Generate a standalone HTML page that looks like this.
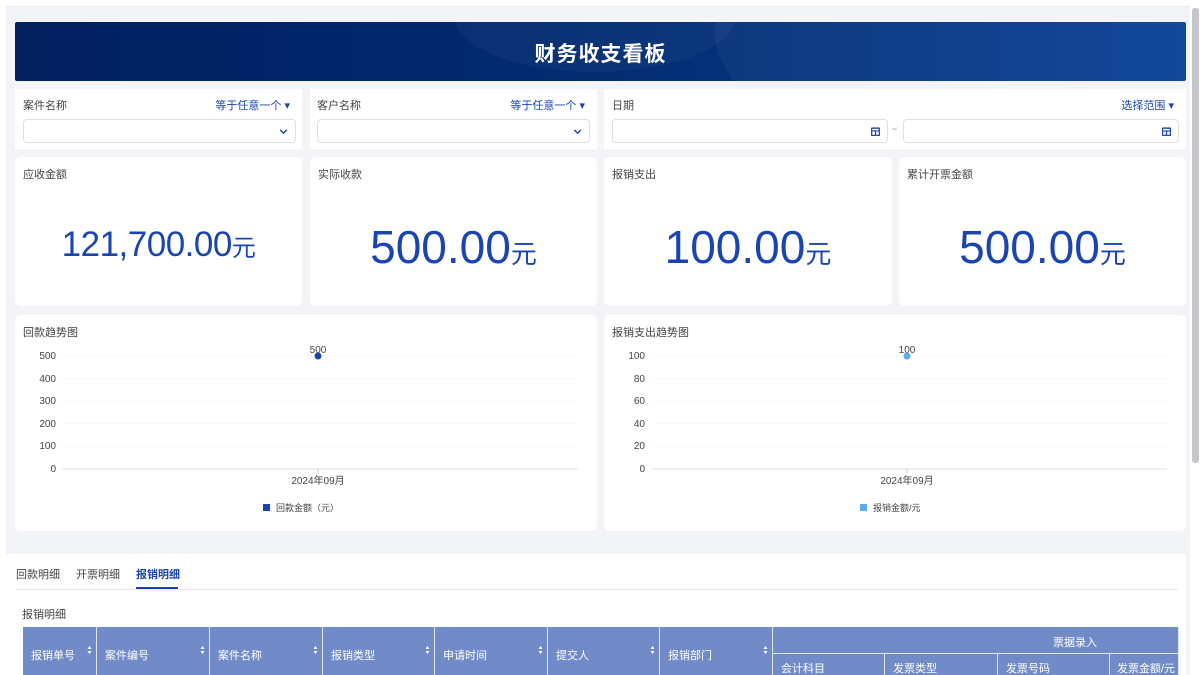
<!DOCTYPE html>
<html><head><meta charset="utf-8"><style>
*{box-sizing:border-box;margin:0;padding:0}
html,body{width:1200px;height:675px;overflow:hidden}
body{background:#fff;font-family:"Liberation Sans","Noto Sans CJK SC",sans-serif;color:#333;position:relative}
.bg{position:absolute;left:6px;top:6px;width:1184px;height:669px;background:#f3f4f8;border-top:1px solid #e8e9ee}
.abs{position:absolute}
.card{position:absolute;background:#fff;border-radius:6px}
.banner{left:15px;top:22px;width:1171px;height:59px;border-radius:2px;background:linear-gradient(90deg,#021f5e 0%,#032c72 50%,#0a4196 100%);overflow:hidden}
.banner h1{position:absolute;width:100%;top:16px;text-align:center;color:#fff;font-size:21px;font-weight:bold;letter-spacing:1px}
.lbl{font-size:11px;color:#444}
.blue{color:#1a45b0}
.inp{position:absolute;height:24px;border:1px solid #dcdfe6;border-radius:4px;background:#fff}
.kt{position:absolute;left:8px;top:9px;font-size:11px;color:#444}
.kv{position:absolute;left:0;right:0;text-align:center;color:#1a45b0}
.ax{font-size:10px;fill:#444}
.th{position:absolute;top:627px;height:48px;background:#718bc8;color:#fff;font-size:11px;border-right:1px solid #dfe5f3}
.srt{position:absolute;right:4px;top:17px;width:5px;height:12px}
</style></head><body>
<div class="bg"></div>
<div class="abs" style="left:1192px;top:8px;width:7px;height:455px;background:#c4c6cb;border-radius:3px"></div>
<div class="card banner">
<div class="abs" style="left:440px;top:-60px;width:280px;height:110px;border-radius:50%;background:rgba(255,255,255,0.035)"></div>
<div class="abs" style="left:700px;top:-140px;width:700px;height:300px;border-radius:50%;background:rgba(255,255,255,0.04)"></div>
<h1>财务收支看板</h1></div>

<svg width="0" height="0" style="position:absolute"><defs>
<symbol id="chev" viewBox="0 0 10 10"><path d="M2 3.5 L5 6.5 L8 3.5" fill="none" stroke="#1a45b0" stroke-width="1.3"/></symbol>
<symbol id="cal" viewBox="0 0 10 10"><rect x="1.5" y="2" width="7" height="6.5" fill="none" stroke="#1a45b0" stroke-width="1.1"/><path d="M1.5 4.5H8.5M5 4.5V8.5M3.5 1V2.5M6.5 1V2.5" stroke="#1a45b0" stroke-width="1.1"/></symbol>
<symbol id="srt" viewBox="0 0 5 12"><path d="M0.5 5 L2.5 2 L4.5 5Z M0.5 7 L2.5 10 L4.5 7Z" fill="#fff"/></symbol>
</defs></svg>

<div class="card" style="left:15px;top:89px;width:287px;height:60px;border-radius:0">
<div class="abs lbl" style="left:8px;top:8px">案件名称</div>
<div class="abs blue" style="right:12px;top:8px;font-size:11px">等于任意一个 ▾</div>
<div class="inp" style="left:8px;top:30px;width:273px"><svg class="abs" style="right:6px;top:6px" width="11" height="11"><use href="#chev"/></svg></div></div>
<div class="card" style="left:310px;top:89px;width:287px;height:60px;border-radius:0">
<div class="abs lbl" style="left:7px;top:8px">客户名称</div>
<div class="abs blue" style="right:12px;top:8px;font-size:11px">等于任意一个 ▾</div>
<div class="inp" style="left:7px;top:30px;width:273px"><svg class="abs" style="right:6px;top:6px" width="11" height="11"><use href="#chev"/></svg></div></div>
<div class="card" style="left:604px;top:89px;width:582px;height:60px;border-radius:0">
<div class="abs lbl" style="left:8px;top:8px">日期</div>
<div class="abs blue" style="right:12px;top:8px;font-size:11px">选择范围 ▾</div>
<div class="inp" style="left:8px;top:30px;width:276px"><svg class="abs" style="right:6px;top:6px" width="11" height="11"><use href="#cal"/></svg></div>
<div class="abs" style="left:288px;top:35px;font-size:9px;color:#888">~</div>
<div class="inp" style="left:299px;top:30px;width:276px"><svg class="abs" style="right:6px;top:6px" width="11" height="11"><use href="#cal"/></svg></div></div>

<div class="card" style="left:15px;top:157px;width:287px;height:149px"><div class="kt">应收金额</div><div class="kv" style="top:68px;font-size:35px;letter-spacing:-0.5px">121,700.00<span style="font-size:24px">元</span></div></div>
<div class="card" style="left:310px;top:157px;width:287px;height:149px"><div class="kt">实际收款</div><div class="kv" style="top:63px;font-size:46px">500.00<span style="font-size:26px">元</span></div></div>
<div class="card" style="left:604px;top:157px;width:288px;height:149px"><div class="kt">报销支出</div><div class="kv" style="top:63px;font-size:46px">100.00<span style="font-size:26px">元</span></div></div>
<div class="card" style="left:899px;top:157px;width:287px;height:149px"><div class="kt">累计开票金额</div><div class="kv" style="top:63px;font-size:46px">500.00<span style="font-size:26px">元</span></div></div>

<div class="card" style="left:15px;top:315px;width:582px;height:216px"><div class="kt" style="top:9px">回款趋势图</div></div>
<div class="card" style="left:604px;top:315px;width:582px;height:216px"><div class="kt" style="top:9px">报销支出趋势图</div></div>
<svg class="abs" style="left:0;top:0" width="1200" height="540" font-family="Liberation Sans,Noto Sans CJK SC,sans-serif">
<g stroke="#f0f0f0" stroke-dasharray="2,2"><line x1="62" x2="578" y1="356" y2="356"/><line x1="62" x2="578" y1="378.6" y2="378.6"/><line x1="62" x2="578" y1="401.2" y2="401.2"/><line x1="62" x2="578" y1="423.8" y2="423.8"/><line x1="62" x2="578" y1="446.4" y2="446.4"/>
<line x1="652" x2="1167" y1="356" y2="356"/><line x1="652" x2="1167" y1="378.6" y2="378.6"/><line x1="652" x2="1167" y1="401.2" y2="401.2"/><line x1="652" x2="1167" y1="423.8" y2="423.8"/><line x1="652" x2="1167" y1="446.4" y2="446.4"/></g>
<line x1="62" x2="578" y1="469" y2="469" stroke="#ddd"/><line x1="652" x2="1167" y1="469" y2="469" stroke="#ddd"/>
<line x1="318" x2="318" y1="469" y2="473" stroke="#ccc"/><line x1="907" x2="907" y1="469" y2="473" stroke="#ccc"/>
<g class="ax" text-anchor="end"><text x="56" y="359">500</text><text x="56" y="382">400</text><text x="56" y="404">300</text><text x="56" y="427">200</text><text x="56" y="449">100</text><text x="56" y="472">0</text>
<text x="645" y="359">100</text><text x="645" y="382">80</text><text x="645" y="404">60</text><text x="645" y="427">40</text><text x="645" y="449">20</text><text x="645" y="472">0</text></g>
<g class="ax" text-anchor="middle"><text x="318" y="353">500</text><text x="318" y="484">2024年09月</text><text x="907" y="353">100</text><text x="907" y="484">2024年09月</text></g>
<circle cx="318" cy="356" r="3.5" fill="#1a45b0"/><circle cx="907" cy="356" r="3.5" fill="#5aaee8"/>
<rect x="263" y="504" width="7" height="7" fill="#1a45b0"/><text x="276" y="511" font-size="9" fill="#444">回款金额（元）</text>
<rect x="860" y="504" width="7" height="7" fill="#5aaee8"/><text x="873" y="511" font-size="9" fill="#444">报销金额/元</text>
</svg>

<div class="abs" style="left:6px;top:554px;width:1180px;height:121px;background:#fff"></div>
<div class="abs" style="left:16px;top:566px;font-size:11px;color:#444">回款明细</div>
<div class="abs" style="left:76px;top:566px;font-size:11px;color:#444">开票明细</div>
<div class="abs" style="left:136px;top:566px;font-size:11px;color:#1a45b0;font-weight:bold">报销明细</div>
<div class="abs" style="left:16px;top:589px;width:1162px;height:1px;background:#e6e6e6"></div>
<div class="abs" style="left:136px;top:587px;width:42px;height:2px;background:#1a45b0"></div>
<div class="abs" style="left:22px;top:606px;font-size:11px;color:#444">报销明细</div>

<div class="th" style="left:23px;width:74px"><span class="abs" style="left:8px;top:20px">报销单号</span><svg class="srt"><use href="#srt"/></svg></div>
<div class="th" style="left:97px;width:113px"><span class="abs" style="left:8px;top:20px">案件编号</span><svg class="srt"><use href="#srt"/></svg></div>
<div class="th" style="left:210px;width:113px"><span class="abs" style="left:8px;top:20px">案件名称</span><svg class="srt"><use href="#srt"/></svg></div>
<div class="th" style="left:323px;width:112px"><span class="abs" style="left:8px;top:20px">报销类型</span><svg class="srt"><use href="#srt"/></svg></div>
<div class="th" style="left:435px;width:113px"><span class="abs" style="left:8px;top:20px">申请时间</span><svg class="srt"><use href="#srt"/></svg></div>
<div class="th" style="left:548px;width:112px"><span class="abs" style="left:8px;top:20px">提交人</span><svg class="srt"><use href="#srt"/></svg></div>
<div class="th" style="left:660px;width:113px"><span class="abs" style="left:8px;top:20px">报销部门</span><svg class="srt"><use href="#srt"/></svg></div>
<div class="th" style="left:773px;width:406px;height:26px"><span class="abs" style="left:280px;top:7px">票据录入</span></div>
<div class="th" style="left:773px;top:653px;height:22px;width:112px;border-top:1px solid #dfe5f3"><span class="abs" style="left:8px;top:6px">会计科目</span></div>
<div class="th" style="left:885px;top:653px;height:22px;width:113px;border-top:1px solid #dfe5f3"><span class="abs" style="left:8px;top:6px">发票类型</span></div>
<div class="th" style="left:998px;top:653px;height:22px;width:112px;border-top:1px solid #dfe5f3"><span class="abs" style="left:8px;top:6px">发票号码</span></div>
<div class="th" style="left:1110px;top:653px;height:22px;width:69px;border-top:1px solid #dfe5f3"><span class="abs" style="left:7px;top:6px">发票金额/元</span></div>
</body></html>
